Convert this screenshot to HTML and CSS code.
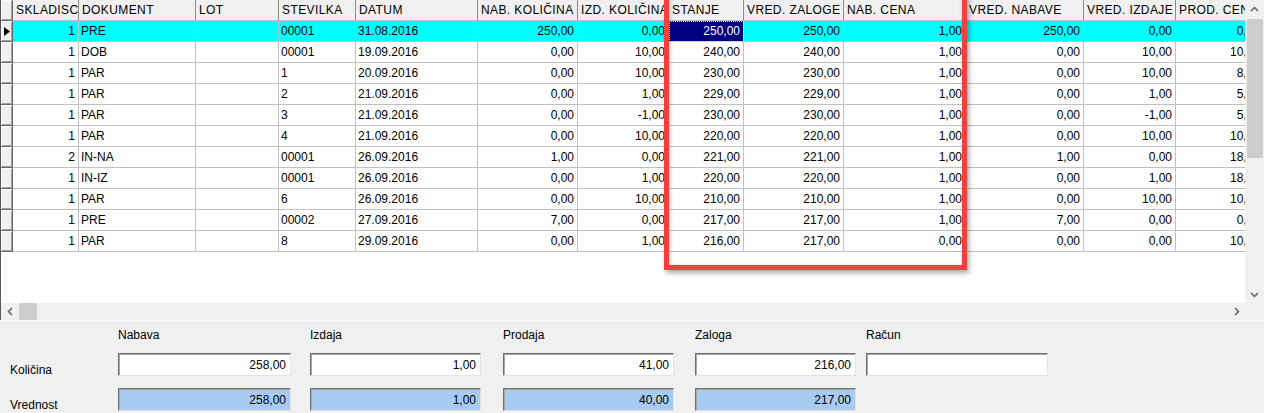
FILE: index.html
```html
<!DOCTYPE html>
<html lang="sl">
<head>
    <meta charset="UTF-8">
    <title>Kartica artikla</title>
    <link rel="stylesheet" href="styles.css">
</head>
<body>
    <div class="window">
        <div class="grid-frame">
            <div class="viewport">
                <table class="grid">
                    <colgroup>
                        <col style="width:12px"><col style="width:66px"><col style="width:117px"><col style="width:83px">
                        <col style="width:77px"><col style="width:122px"><col style="width:100px"><col style="width:91px">
                        <col style="width:75px"><col style="width:100px"><col style="width:122px"><col style="width:118px">
                        <col style="width:92px"><col style="width:88px">
                    </colgroup>
                    <thead>
                        <tr>
                            <th class="ind"></th>
                            <th>SKLADISCE</th><th>DOKUMENT</th><th>LOT</th><th>STEVILKA</th><th>DATUM</th>
                            <th>NAB. KOLIČINA</th><th>IZD. KOLIČINA</th><th>STANJE</th><th>VRED. ZALOGE</th>
                            <th>NAB. CENA</th><th>VRED. NABAVE</th><th>VRED. IZDAJE</th><th>PROD. CENA</th>
                        </tr>
                    </thead>
                    <tbody>
                        <tr class="current">
                            <td class="ind"><svg width="6" height="9" viewBox="0 0 6 9"><path d="M0 0 L6 4.5 L0 9 Z" fill="#000"/></svg></td>
                            <td class="num">1</td><td>PRE</td><td></td><td>00001</td><td>31.08.2016</td>
                            <td class="num">250,00</td><td class="num">0,00</td><td class="num focus">250,00</td><td class="num">250,00</td>
                            <td class="num">1,00</td><td class="num">250,00</td><td class="num">0,00</td><td class="num">0,00</td>
                        </tr>
                        <tr>
                            <td class="ind"></td>
                            <td class="num">1</td><td>DOB</td><td></td><td>00001</td><td>19.09.2016</td>
                            <td class="num">0,00</td><td class="num">10,00</td><td class="num">240,00</td><td class="num">240,00</td>
                            <td class="num">1,00</td><td class="num">0,00</td><td class="num">10,00</td><td class="num">10,00</td>
                        </tr>
                        <tr>
                            <td class="ind"></td>
                            <td class="num">1</td><td>PAR</td><td></td><td>1</td><td>20.09.2016</td>
                            <td class="num">0,00</td><td class="num">10,00</td><td class="num">230,00</td><td class="num">230,00</td>
                            <td class="num">1,00</td><td class="num">0,00</td><td class="num">10,00</td><td class="num">8,00</td>
                        </tr>
                        <tr>
                            <td class="ind"></td>
                            <td class="num">1</td><td>PAR</td><td></td><td>2</td><td>21.09.2016</td>
                            <td class="num">0,00</td><td class="num">1,00</td><td class="num">229,00</td><td class="num">229,00</td>
                            <td class="num">1,00</td><td class="num">0,00</td><td class="num">1,00</td><td class="num">5,00</td>
                        </tr>
                        <tr>
                            <td class="ind"></td>
                            <td class="num">1</td><td>PAR</td><td></td><td>3</td><td>21.09.2016</td>
                            <td class="num">0,00</td><td class="num">-1,00</td><td class="num">230,00</td><td class="num">230,00</td>
                            <td class="num">1,00</td><td class="num">0,00</td><td class="num">-1,00</td><td class="num">5,00</td>
                        </tr>
                        <tr>
                            <td class="ind"></td>
                            <td class="num">1</td><td>PAR</td><td></td><td>4</td><td>21.09.2016</td>
                            <td class="num">0,00</td><td class="num">10,00</td><td class="num">220,00</td><td class="num">220,00</td>
                            <td class="num">1,00</td><td class="num">0,00</td><td class="num">10,00</td><td class="num">10,00</td>
                        </tr>
                        <tr>
                            <td class="ind"></td>
                            <td class="num">2</td><td>IN-NA</td><td></td><td>00001</td><td>26.09.2016</td>
                            <td class="num">1,00</td><td class="num">0,00</td><td class="num">221,00</td><td class="num">221,00</td>
                            <td class="num">1,00</td><td class="num">1,00</td><td class="num">0,00</td><td class="num">18,00</td>
                        </tr>
                        <tr>
                            <td class="ind"></td>
                            <td class="num">1</td><td>IN-IZ</td><td></td><td>00001</td><td>26.09.2016</td>
                            <td class="num">0,00</td><td class="num">1,00</td><td class="num">220,00</td><td class="num">220,00</td>
                            <td class="num">1,00</td><td class="num">0,00</td><td class="num">1,00</td><td class="num">18,00</td>
                        </tr>
                        <tr>
                            <td class="ind"></td>
                            <td class="num">1</td><td>PAR</td><td></td><td>6</td><td>26.09.2016</td>
                            <td class="num">0,00</td><td class="num">10,00</td><td class="num">210,00</td><td class="num">210,00</td>
                            <td class="num">1,00</td><td class="num">0,00</td><td class="num">10,00</td><td class="num">10,00</td>
                        </tr>
                        <tr>
                            <td class="ind"></td>
                            <td class="num">1</td><td>PRE</td><td></td><td>00002</td><td>27.09.2016</td>
                            <td class="num">7,00</td><td class="num">0,00</td><td class="num">217,00</td><td class="num">217,00</td>
                            <td class="num">1,00</td><td class="num">7,00</td><td class="num">0,00</td><td class="num">0,00</td>
                        </tr>
                        <tr>
                            <td class="ind"></td>
                            <td class="num">1</td><td>PAR</td><td></td><td>8</td><td>29.09.2016</td>
                            <td class="num">0,00</td><td class="num">1,00</td><td class="num">216,00</td><td class="num">217,00</td>
                            <td class="num">0,00</td><td class="num">0,00</td><td class="num">0,00</td><td class="num">10,00</td>
                        </tr>
                    </tbody>
                </table>
            </div>

            <div class="vscroll">
                <div class="arrow"><svg width="9" height="6" viewBox="0 0 9 6"><polyline points="1,5 4.5,1.5 8,5" fill="none" stroke="#606060" stroke-width="1.5"/></svg></div>
                <div class="vthumb"></div>
                <div class="spacer"></div>
                <div class="arrow"><svg width="9" height="6" viewBox="0 0 9 6"><polyline points="1,1 4.5,4.5 8,1" fill="none" stroke="#606060" stroke-width="1.5"/></svg></div>
            </div>

            <div class="hscroll">
                <div class="arrow"><svg width="6" height="9" viewBox="0 0 6 9"><polyline points="5,1 1.5,4.5 5,8" fill="none" stroke="#606060" stroke-width="1.5"/></svg></div>
                <div class="hthumb"></div>
                <div class="spacer"></div>
                <div class="arrow"><svg width="6" height="9" viewBox="0 0 6 9"><polyline points="1,1 4.5,4.5 1,8" fill="none" stroke="#606060" stroke-width="1.5"/></svg></div>
            </div>
            <div class="corner"></div>
        </div>

        <div class="totals">
            <div></div>
            <div class="col-title">Nabava</div>
            <div class="col-title">Izdaja</div>
            <div class="col-title">Prodaja</div>
            <div class="col-title">Zaloga</div>
            <div class="col-title">Račun</div>

            <div class="row-label">Količina</div>
            <input class="field w-nab" value="258,00" readonly>
            <input class="field w-izd" value="1,00" readonly>
            <input class="field w-pro" value="41,00" readonly>
            <input class="field w-zal" value="216,00" readonly>
            <input class="field w-rac" value="" readonly>

            <div class="row-label">Vrednost</div>
            <input class="field sum w-nab" value="258,00" readonly>
            <input class="field sum w-izd" value="1,00" readonly>
            <input class="field sum w-pro" value="40,00" readonly>
            <input class="field sum w-zal" value="217,00" readonly>
            <div></div>
        </div>

        <!-- highlight frame drawn over the stock columns -->
        <div class="callout"></div>
    </div>
</body>
</html>
```

FILE: styles.css
```css
body {
    margin: 0;
    font-family: "Liberation Sans", Arial, sans-serif;
    font-size: 12px;
    color: #000;
    background-color: #f0f0f0;
    overflow: hidden;
}
.window {
    position: relative;
    width: 1264px;
    height: 413px;
}
.grid-frame {
    display: grid;
    grid-template-columns: 1fr 19px;
    grid-template-rows: 303px 17px;
    border-left: 1px solid #5a5a5a;
    background-color: #fff;
}
.viewport {
    overflow: hidden;
}
.grid {
    table-layout: fixed;
    width: 1263px;
    border-collapse: separate;
    border-spacing: 0;
}
.grid th,
.grid td {
    height: 20px;
    line-height: 20px;
    padding: 0 3px 0 2px;
    white-space: nowrap;
    overflow: hidden;
    text-overflow: clip;
    border-right: 1px solid #c0c0c0;
    border-bottom: 1px solid #c0c0c0;
}
.grid th {
    padding-left: 3px;
    font-weight: normal;
    letter-spacing: 0.4px;
    text-align: left;
    background-color: #f0f0f0;
    border-right-color: #8a8a8a;
}
.grid td.num {
    text-align: right;
}
.grid .ind {
    padding: 0;
    background-color: #f0f0f0;
    border-right-color: #6a6a6a;
    border-bottom-color: #6a6a6a;
    box-shadow: inset 1px 1px 0 #fff, inset -1px -1px 0 #a0a0a0;
}
.grid .ind svg {
    display: block;
    margin: 0 0 0 3px;
}
.grid tr.current td {
    background-color: #00ffff;
}
.grid tr.current td.ind {
    background-color: #f0f0f0;
}
.grid tr.current td.focus {
    background-color: #000080;
    color: #fff;
    outline: 1px dotted #ffff00;
    outline-offset: -1px;
}
.vscroll {
    display: flex;
    flex-direction: column;
    background-color: #f0f0f0;
}
.vscroll .arrow {
    height: 17px;
    display: flex;
    align-items: center;
    justify-content: center;
}
.vthumb {
    height: 139px;
    margin: 2px 1px 0 2px;
    background-color: #cdcdcd;
}
.spacer {
    flex: 1;
}
.hscroll {
    display: flex;
    background-color: #f0f0f0;
}
.hscroll .arrow {
    width: 17px;
    display: flex;
    align-items: center;
    justify-content: center;
}
.hthumb {
    width: 18px;
    margin-left: 1px;
    background-color: #cdcdcd;
}
.corner {
    background-color: #f0f0f0;
}
.totals {
    display: grid;
    grid-template-columns: 118px 192px 193px 192px 171px 182px;
    grid-template-rows: 32px 35px 25px;
    border-top: 1px solid #fbfbfb;
}
.col-title {
    padding-top: 7px;
}
.row-label {
    padding: 10px 0 0 10px;
}
.field {
    height: 23px;
    box-sizing: border-box;
    margin: 0;
    padding: 0 4px;
    font: inherit;
    color: #000;
    text-align: right;
    background-color: #fff;
    border: 1px solid;
    border-color: #6f6f6f #e3e3e3 #e3e3e3 #6f6f6f;
    box-shadow: inset 1px 1px 0 #a8a8a8;
    outline: none;
}
.field.sum {
    background-color: #a6caf0;
}
.w-nab { width: 173px; }
.w-izd { width: 171px; }
.w-pro { width: 171px; }
.w-zal { width: 161px; }
.w-rac { width: 182px; }
.callout {
    position: absolute;
    left: 664px;
    top: -12px;
    width: 303px;
    height: 282px;
    box-sizing: border-box;
    border: 5px solid #f0403f;
    box-shadow: 2px 3px 5px rgba(0, 0, 0, 0.35), inset 1px 1px 4px rgba(0, 0, 0, 0.25);
    pointer-events: none;
}
```
